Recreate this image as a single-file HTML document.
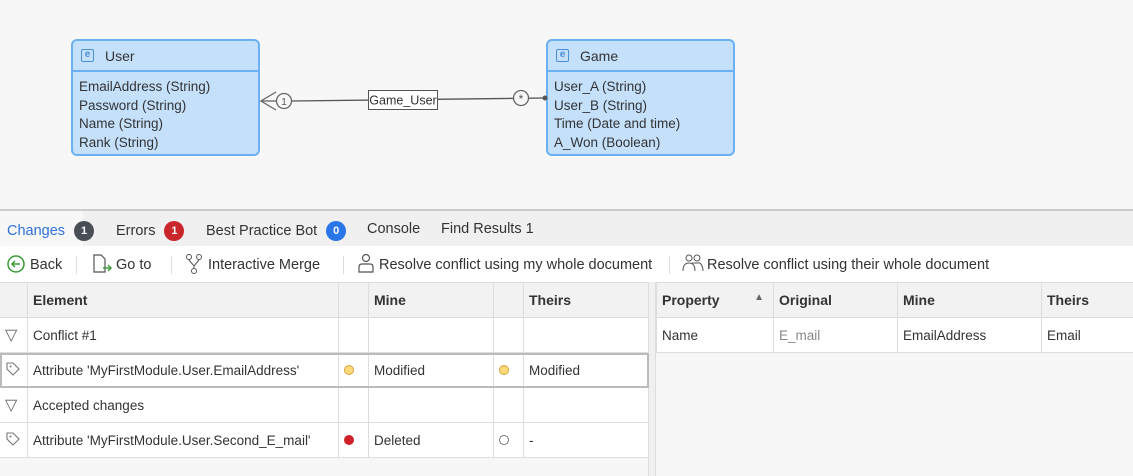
<!DOCTYPE html>
<html><head><style>
*{box-sizing:border-box;margin:0;padding:0}
body{width:1133px;height:476px;overflow:hidden;font-family:"Liberation Sans",sans-serif;font-size:14px;color:#333;background:#f7f7f7;position:relative}
.abs{position:absolute}
.ent{position:absolute;background:#c5e0fb;border:2px solid #6ab0f3;border-radius:6px;width:189px;height:117px}
.ent .h{height:31px;border-bottom:2px solid #6ab0f3;padding:0 0 0 8px;font-size:14px;display:flex;align-items:center}
.ent .h i{display:inline-block;width:13px;height:13px;border:1.5px solid #4a90d9;border-radius:2px;font-style:normal;font-size:10px;line-height:10px;text-align:center;color:#4a90d9;margin-right:11px;font-weight:bold}
.ent .b{padding:6px 0 0 6px;line-height:18.5px;font-size:13.5px}
.tabs{top:209px;left:0;width:1133px;height:37px;background:#f0f0f0;border-top:2px solid #ccc}
.tab{position:absolute;top:10px;font-size:14.5px}
.badge{display:inline-block;width:20px;height:20px;border-radius:10px;color:#fff;font-size:11px;font-weight:bold;text-align:center;line-height:20px;margin-left:9px;vertical-align:1px}
.tb{top:246px;left:0;width:1133px;height:36px;background:#fff;font-size:14.5px}
.tb span{position:absolute;top:11px}
.sep{position:absolute;top:10px;width:1px;height:18px;background:#ddd}
table{border-collapse:collapse;position:absolute;table-layout:fixed;font-size:13.5px}
td{border:1px solid #ddd;height:35px;padding:0 5px;background:#fff;white-space:nowrap;overflow:hidden}
tr.hd td{background:#f2f2f2;font-weight:bold;color:#333;font-size:14px}
.dot{display:inline-block;width:10px;height:10px;border-radius:5px}
</style></head><body>
<div class="ent" style="left:71px;top:39px"><div class="h"><i>e</i>User</div><div class="b">EmailAddress (String)<br>Password (String)<br>Name (String)<br>Rank (String)</div></div>
<div class="ent" style="left:546px;top:39px"><div class="h"><i>e</i>Game</div><div class="b">User_A (String)<br>User_B (String)<br>Time (Date and time)<br>A_Won (Boolean)</div></div>
<svg class="abs" style="left:0;top:0" width="1133" height="209">
<line x1="292" y1="101" x2="546" y2="98" stroke="#555" stroke-width="1.3"/>
<polyline points="276,92 261,101 276,110" fill="none" stroke="#666" stroke-width="1.3"/>
<line x1="261" y1="101" x2="276" y2="101" stroke="#666" stroke-width="1.3"/>
<circle cx="284" cy="101" r="7.5" fill="#f7f7f7" stroke="#666" stroke-width="1.3"/>
<text x="284" y="105" font-size="10" text-anchor="middle" fill="#555" font-family="Liberation Sans">1</text>
<circle cx="521" cy="98" r="7.5" fill="#f7f7f7" stroke="#666" stroke-width="1.3"/>
<text x="521" y="103" font-size="12" text-anchor="middle" fill="#555" font-family="Liberation Sans">*</text>
<circle cx="545" cy="98" r="2.5" fill="#555"/>
<rect x="368.5" y="90.5" width="69" height="19" fill="#fff" stroke="#555"/>
<text x="403" y="104.5" font-size="12.5" text-anchor="middle" fill="#333" font-family="Liberation Sans">Game_User</text>
</svg>
<div class="abs tabs">
<div class="abs" style="left:0;top:0;width:83px;height:35px;background:#f7f7f7"></div>
<div class="tab" style="left:7px;color:#2d72d9">Changes<span class="badge" style="background:#4a4f57">1</span></div>
<div class="tab" style="left:116px">Errors<span class="badge" style="background:#c9262b">1</span></div>
<div class="tab" style="left:206px">Best Practice Bot<span class="badge" style="background:#2a76e8">0</span></div>
<div class="tab" style="left:367px">Console</div>
<div class="tab" style="left:441px">Find Results 1</div>
</div>
<div class="abs tb">
<svg class="abs" style="left:7px;top:9px" width="18" height="18"><circle cx="9" cy="9" r="8" fill="none" stroke="#3a9a3a" stroke-width="1.5"/><path d="M13 9H5M8 6L5 9L8 12" fill="none" stroke="#3a9a3a" stroke-width="1.5"/></svg>
<span style="left:30px">Back</span><div class="sep" style="left:76px"></div>
<svg class="abs" style="left:92px;top:8px" width="22" height="20"><path d="M2 1h7l4 4v13H2z" fill="none" stroke="#555" stroke-width="1.2"/><path d="M11 14h8M16 11l3 3-3 3" fill="none" stroke="#3a9a3a" stroke-width="1.4"/></svg>
<span style="left:116px">Go to</span><div class="sep" style="left:171px"></div>
<svg class="abs" style="left:185px;top:7px" width="20" height="22"><circle cx="4" cy="4" r="2.5" fill="none" stroke="#555"/><circle cx="14" cy="4" r="2.5" fill="none" stroke="#555"/><circle cx="9" cy="18" r="2.5" fill="none" stroke="#555"/><path d="M4 7l5 6 5-6M9 13v2" fill="none" stroke="#555"/></svg>
<span style="left:208px">Interactive Merge</span><div class="sep" style="left:343px"></div>
<svg class="abs" style="left:357px;top:7px" width="18" height="22"><circle cx="9" cy="5" r="3.5" fill="none" stroke="#555" stroke-width="1.2"/><path d="M2 19v-5q0-3 3-3h8q3 0 3 3v5z" fill="none" stroke="#555" stroke-width="1.2"/></svg>
<span style="left:379px">Resolve conflict using my whole document</span><div class="sep" style="left:669px"></div>
<svg class="abs" style="left:682px;top:8px" width="22" height="20"><circle cx="7" cy="4" r="3" fill="none" stroke="#555"/><circle cx="15" cy="4" r="3" fill="none" stroke="#555"/><path d="M1 17q0-8 6-8t6 8M10 9q5 0 8 0 3 3 3 8" fill="none" stroke="#555"/></svg>
<span style="left:707px">Resolve conflict using their whole document</span>
</div>
<div class="abs" style="left:648px;top:282px;width:8px;height:194px;background:#f0f0f0;border-left:1px solid #ddd;border-right:1px solid #ddd"></div>
<div class="abs" style="left:0;top:457px;width:648px;height:19px;background:#f7f7f7"></div>
<div class="abs" style="left:656px;top:352px;width:477px;height:124px;background:#f7f7f7"></div>
<table style="left:-1px;top:282px;width:649px">
<colgroup><col style="width:28px"><col style="width:311px"><col style="width:30px"><col style="width:125px"><col style="width:30px"><col style="width:125px"></colgroup>
<tr class="hd"><td></td><td>Element</td><td></td><td>Mine</td><td></td><td>Theirs</td></tr>
<tr><td style="color:#666;font-size:16px">▽</td><td>Conflict #1</td><td></td><td></td><td></td><td></td></tr>
<tr style="outline:2px solid #bbb;outline-offset:-2px"><td><svg width="16" height="16"><path d="M2 2h6l6 6-6 6-6-6z" fill="none" stroke="#777" stroke-width="1.1"/><circle cx="5.5" cy="5.5" r="1" fill="#777"/></svg></td><td>Attribute 'MyFirstModule.User.EmailAddress'</td><td><span class="dot" style="background:#fcd97a;border:1.5px solid #d9a33a"></span></td><td>Modified</td><td><span class="dot" style="background:#fcd97a;border:1.5px solid #d9a33a"></span></td><td>Modified</td></tr>
<tr><td style="color:#666;font-size:16px">▽</td><td>Accepted changes</td><td></td><td></td><td></td><td></td></tr>
<tr><td><svg width="16" height="16"><path d="M2 2h6l6 6-6 6-6-6z" fill="none" stroke="#777" stroke-width="1.1"/><circle cx="5.5" cy="5.5" r="1" fill="#777"/></svg></td><td>Attribute 'MyFirstModule.User.Second_E_mail'</td><td><span class="dot" style="background:#d0202a"></span></td><td>Deleted</td><td><span class="dot" style="border:1.5px solid #777"></span></td><td>-</td></tr>
</table>
<table style="left:656px;top:282px;width:478px">
<colgroup><col style="width:117px"><col style="width:124px"><col style="width:144px"><col style="width:93px"></colgroup>
<tr class="hd"><td>Property <span style="float:right;font-size:10px;color:#666;font-weight:normal;margin-right:4px">▲</span></td><td>Original</td><td>Mine</td><td>Theirs</td></tr>
<tr><td>Name</td><td style="color:#888">E_mail</td><td>EmailAddress</td><td>Email</td></tr>
</table>
</body></html>
